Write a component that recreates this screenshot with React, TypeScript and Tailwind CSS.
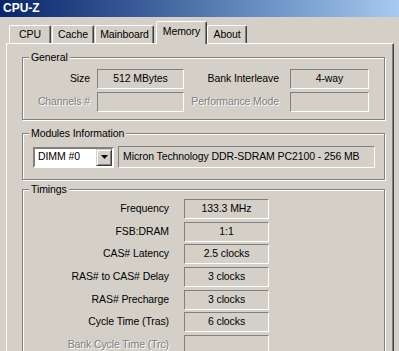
import React from "react";

const label = "flex items-center justify-end whitespace-nowrap";
const off = "text-[#808080] [text-shadow:1px_1px_0_#ffffff]";
const sunken = "flex items-center justify-center border border-t-[#808080] border-l-[#808080] border-b-white border-r-white whitespace-nowrap";

function Group({ title, className, children }: { title: string; className?: string; children: React.ReactNode }) {
  return (
    <div className={`relative ml-[15px] w-[363px] border border-[#808080] shadow-[1px_1px_0_#ffffff,inset_1px_1px_0_#ffffff] ${className ?? ""}`}>
      <span className="absolute -top-[8px] left-[6px] bg-[#d4d0c8] px-[2px] leading-[14px]">{title}</span>
      {children}
    </div>
  );
}

const tabs = [
  { name: "CPU", cls: "ml-[9px] w-[42px]" },
  { name: "Cache", cls: "ml-[1px] w-[42px]" },
  { name: "Mainboard", cls: "ml-[1px] w-[59px]" },
  { name: "Memory", cls: "ml-[2px] w-[51px]", active: true },
  { name: "About", cls: "ml-0 w-[40px]" },
];

const timings = [
  { k: "Frequency", v: "133.3 MHz" },
  { k: "FSB:DRAM", v: "1:1" },
  { k: "CAS# Latency", v: "2.5 clocks" },
  { k: "RAS# to CAS# Delay", v: "3 clocks" },
  { k: "RAS# Precharge", v: "3 clocks" },
  { k: "Cycle Time (Tras)", v: "6 clocks" },
  { k: "Bank Cycle Time (Trc)", v: "", dis: true },
  { k: "Command Rate", v: "", dis: true },
];

export default function App() {
  return (
    <div className="w-[399px] h-[351px] overflow-hidden bg-[#d4d0c8] text-[10.5px] tracking-[-0.1px] text-black font-['Liberation_Sans',Arial,sans-serif]">
      <div className="h-[17px] bg-gradient-to-r from-[#0a246a] to-[#a6caf0] pl-[3px] text-[12px] font-bold leading-[16px] tracking-normal text-white">
        CPU-Z
      </div>

      <div className="flex h-[26px] items-end">
        {tabs.map((t) =>
          t.active ? (
            <div
              key={t.name}
              className={`${t.cls} relative z-10 -mb-px flex h-[23px] items-center justify-center rounded-t-[2px] border-l border-t border-r border-l-white border-t-white border-r-[#404040] bg-[#d4d0c8] pb-[3px] shadow-[inset_-1px_0_0_#808080]`}
            >
              {t.name}
            </div>
          ) : (
            <div
              key={t.name}
              className={`${t.cls} flex h-[18px] items-center justify-center rounded-t-[2px] border-l border-t border-r border-l-white border-t-white border-r-[#404040] shadow-[inset_-1px_0_0_#808080]`}
            >
              {t.name}
            </div>
          )
        )}
      </div>

      <div className="ml-[6px] flex h-[330px] w-[388px] flex-col border-l border-t border-r border-l-white border-t-white border-r-[#404040] shadow-[inset_-1px_0_0_#808080]">
        <Group title="General" className="mt-[13px] pt-[11px] pb-[7px]">
          <div className="grid grid-cols-[66px_87px_102px_79px] gap-y-[3px] pl-px">
            <div className={label}>Size</div>
            <div className={`${sunken} ml-[7px] h-[20px] w-[87px]`}>512 MBytes</div>
            <div className={label}>Bank Interleave</div>
            <div className={`${sunken} ml-[11px] h-[20px] w-[79px]`}>4-way</div>
            <div className={`${label} ${off}`}>Channels #</div>
            <div className={`${sunken} ml-[7px] h-[20px] w-[87px]`}></div>
            <div className={`${label} ${off}`}>Performance Mode</div>
            <div className={`${sunken} ml-[11px] h-[20px] w-[79px]`}></div>
          </div>
        </Group>

        <Group title="Modules Information" className="mt-[13px] pt-[12px] pb-[11px]">
          <div className="flex items-center gap-[4px] pl-[10px]">
            <div className="flex h-[21px] w-[81px] border-2 border-t-[#808080] border-l-[#808080] border-b-white border-r-white bg-white">
              <div className="flex flex-1 items-center pl-[3px]">DIMM #0</div>
              <div className="flex w-[16px] items-center justify-center border border-t-[#d4d0c8] border-l-[#d4d0c8] border-b-[#404040] border-r-[#404040] bg-[#d4d0c8] shadow-[inset_1px_1px_0_#ffffff,inset_-1px_-1px_0_#808080]">
                <svg width="7" height="4" viewBox="0 0 7 4">
                  <path d="M0 0h7L3.5 4z" fill="#000" />
                </svg>
              </div>
            </div>
            <div className={`${sunken} h-[22px] w-[257px] justify-start pl-[4px]`}>
              Micron Technology DDR-SDRAM PC2100 - 256 MB
            </div>
          </div>
        </Group>

        <Group title="Timings" className="mt-[9px] h-[200px] pt-[9px]">
          <div className="flex flex-col gap-[2.67px]">
            {timings.map((r) => (
              <div key={r.k} className="flex h-[20px] items-stretch">
                <div className={`${label} w-[146px] ${r.dis ? off : ""}`}>{r.k}</div>
                <div className={`${sunken} ml-[15px] w-[85px]`}>{r.v}</div>
              </div>
            ))}
          </div>
        </Group>
      </div>
    </div>
  );
}
